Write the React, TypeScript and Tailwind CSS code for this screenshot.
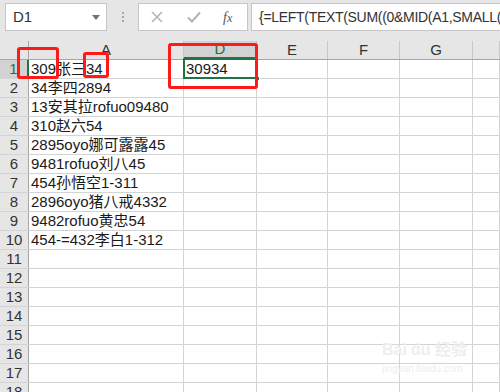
import React from "react";

const cols = [
  { key: "A", w: "w-[155px]" },
  { key: "D", w: "w-[73px]" },
  { key: "E", w: "w-[71px]" },
  { key: "F", w: "w-[72px]" },
  { key: "G", w: "w-[73px]" },
  { key: "H", w: "flex-1" },
];

const data: Record<number, string> = {
  1: "309张三34",
  2: "34李四2894",
  3: "13安其拉rofuo09480",
  4: "310赵六54",
  5: "2895oyo娜可露露45",
  6: "9481rofuo刘八45",
  7: "454孙悟空1-311",
  8: "2896oyo猪八戒4332",
  9: "9482rofuo黄忠54",
  10: "454-=432李白1-312",
};

const rows = Array.from({ length: 18 }, (_, i) => i + 1);

export default function App() {
  return (
    <div
      className="relative w-[500px] h-[392px] overflow-hidden bg-white text-[15px] text-[#1a1a1a]"
      style={{ fontFamily: '"Liberation Sans", "Noto Sans CJK SC", sans-serif' }}
    >
      {/* formula bar */}
      <div className="flex h-[41px] bg-[#e6e6e6] pt-[3px] pl-[5px]">
        <div className="flex items-center justify-between w-[102px] h-[28px] bg-white border border-[#c6c6c6] pl-[7px] pr-[6px]">
          <span className="text-[#333]">D1</span>
          <span className="w-0 h-0 border-l-[4px] border-r-[4px] border-t-[5px] border-l-transparent border-r-transparent border-t-[#707070]" />
        </div>
        <div className="flex flex-col items-center justify-center gap-[2px] w-[31px] h-[28px]">
          <span className="w-[2px] h-[2px] bg-[#a8a8a8]" />
          <span className="w-[2px] h-[2px] bg-[#a8a8a8]" />
          <span className="w-[2px] h-[2px] bg-[#a8a8a8]" />
        </div>
        <div className="flex items-center w-[110px] h-[28px] bg-white border border-[#c6c6c6]">
          <svg width="12" height="12" viewBox="0 0 12 12" className="ml-[12px]">
            <path d="M1 1 L11 11 M11 1 L1 11" stroke="#b4b4b4" strokeWidth="1.6" />
          </svg>
          <svg width="14" height="12" viewBox="0 0 14 12" className="ml-[24px]">
            <path d="M1 6.5 L5 10.5 L13 1.5" stroke="#b4b4b4" strokeWidth="2" fill="none" />
          </svg>
          <span
            className="ml-[22px] italic text-[14px] text-[#555]"
            style={{ fontFamily: '"Liberation Serif", serif' }}
          >
            f<span className="text-[12px]">x</span>
          </span>
        </div>
        <div className="flex-1 flex items-center h-[28px] ml-[3px] bg-white border border-[#c6c6c6] border-r-0 pl-[7px] overflow-hidden whitespace-nowrap text-[14px] tracking-[-0.3px] text-[#333]">
          {"{=LEFT(TEXT(SUM((0&MID(A1,SMALL("}
        </div>
      </div>

      {/* column header */}
      <div className="flex h-[19px] bg-[#e6e6e6] border-b border-[#a6a6a6]">
        <div className="w-[29px] border-r border-[#a6a6a6]" />
        {cols.map((c) => (
          <div
            key={c.key}
            className={`${c.w} flex items-center justify-center border-r ${
              c.key === "D"
                ? "bg-[#d2d2d2] text-[#217346] border-[#bfbfbf] border-b-2 border-b-[#217346]"
                : "text-[#333] border-[#c8c8c8]"
            }`}
          >
            {c.key === "H" ? "" : c.key}
          </div>
        ))}
      </div>

      {/* rows */}
      {rows.map((r) => (
        <div key={r} className="flex h-[19px] border-b border-[#d4d4d4]">
          <div
            className={`w-[29px] flex items-center justify-center border-r ${
              r === 1
                ? "bg-[#d2d2d2] text-[#217346] border-r-2 border-r-[#217346]"
                : "bg-[#e6e6e6] text-[#333] border-[#a6a6a6]"
            }`}
          >
            {r}
          </div>
          {cols.map((c) => (
            <div
              key={c.key}
              className={`${c.w} flex items-center border-r border-[#d4d4d4] pl-[2px] whitespace-nowrap`}
            >
              {c.key === "A" ? data[r] ?? "" : c.key === "D" && r === 1 ? "30934" : ""}
            </div>
          ))}
        </div>
      ))}

      {/* active cell */}
      <div className="absolute left-[183px] top-[58px] w-[75px] h-[21px] border-2 border-[#217346]" />
      <div className="absolute left-[255px] top-[76px] w-[5px] h-[5px] bg-[#217346] border border-white" />

      {/* red annotations */}
      <div className="absolute left-[17px] top-[47px] w-[42px] h-[32px] border-[3px] border-[#ff1a1a] rounded-[3px]" />
      <div className="absolute left-[83px] top-[52px] w-[26px] h-[26px] border-[3px] border-[#ff1a1a] rounded-[3px]" />
      <div className="absolute left-[168px] top-[43px] w-[90px] h-[46px] border-[3px] border-[#ff1a1a] rounded-[3px]" />

      {/* watermark */}
      <div className="absolute left-[382px] top-[342px] flex flex-col items-start text-[#eeeeee] leading-none pointer-events-none">
        <span className="text-[16px] font-bold">Bai<span className="ml-[4px]">du</span> 经验</span>
        <span className="text-[10px] mt-[6px]">jingyan.baidu.com</span>
      </div>
    </div>
  );
}
